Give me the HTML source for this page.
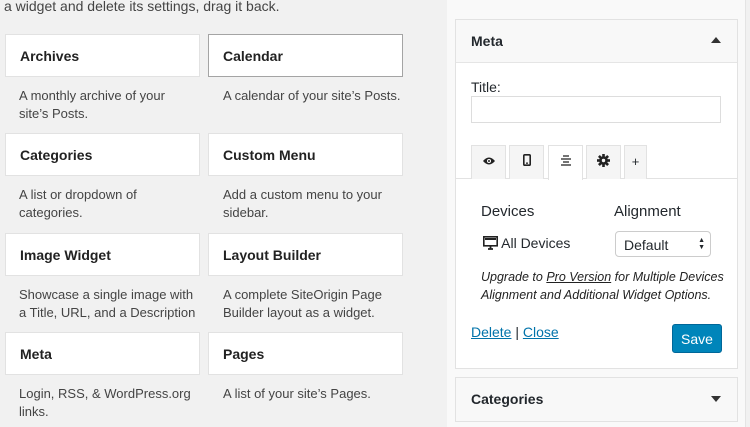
<!DOCTYPE html>
<html><head><meta charset="utf-8"><style>
*{box-sizing:border-box;margin:0;padding:0}
body{width:750px;height:427px;overflow:hidden;background:#f1f1f1;font-family:"Liberation Sans",sans-serif;color:#23282d;position:relative;font-size:13px}
.top{position:absolute;left:4px;top:-2px;font-size:14px;color:#444}
.w{position:absolute;width:195px;height:43px;background:#fff;border:1px solid #e2e2e2;font-weight:bold;font-size:14px;padding:13px 0 0 14px;color:#222}
.w.sel{border:1px solid #a4a4a4}
.d{position:absolute;width:165px;font-size:13px;line-height:18px;color:#444}
.side{position:absolute;left:447px;top:0;width:299px;height:427px;background:#f9f9f9;border-right:1px solid #e4e4e4}
.box{position:absolute;left:455px;width:283px;background:#fff;border:1px solid #e2e2e2}
.hd{background:#f8f8f8;height:43px;font-weight:bold;font-size:14px;padding:13px 0 0 15px;position:relative}
.tab{position:absolute;top:145px;height:34px;background:#f5f5f5;border:1px solid #e2e2e2;border-bottom:none;text-align:center;padding-top:8px;font-size:13px}
a{color:#0073aa}
</style></head><body>
<div class="top">a widget and delete its settings, drag it back.</div>

<div class="w" style="left:5px;top:34px">Archives</div>
<div class="w sel" style="left:208px;top:34px">Calendar</div>
<div class="d" style="left:19px;top:87px">A monthly archive of your site’s Posts.</div>
<div class="d" style="left:223px;top:87px;width:190px">A calendar of your site’s Posts.</div>

<div class="w" style="left:5px;top:133px">Categories</div>
<div class="w" style="left:208px;top:133px">Custom Menu</div>
<div class="d" style="left:19px;top:186px">A list or dropdown of categories.</div>
<div class="d" style="left:223px;top:186px">Add a custom menu to your sidebar.</div>

<div class="w" style="left:5px;top:233px">Image Widget</div>
<div class="w" style="left:208px;top:233px">Layout Builder</div>
<div class="d" style="left:19px;top:286px;width:180px">Showcase a single image with a Title, URL, and a Description</div>
<div class="d" style="left:223px;top:286px;width:160px">A complete SiteOrigin Page Builder layout as a widget.</div>

<div class="w" style="left:5px;top:332px">Meta</div>
<div class="w" style="left:208px;top:332px">Pages</div>
<div class="d" style="left:19px;top:385px;width:190px">Login, RSS, &amp; WordPress.org<br>links.</div>
<div class="d" style="left:223px;top:385px;width:190px">A list of your site’s Pages.</div>

<div class="side"></div>
<div class="box" style="top:19px;height:350px">
 <div class="hd" style="border-bottom:1px solid #e5e5e5">Meta<span style="position:absolute;right:16px;top:17px;width:0;height:0;border-left:5px solid transparent;border-right:5px solid transparent;border-bottom:6px solid #333"></span></div>
</div>
<div style="position:absolute;left:471px;top:79px;font-size:14px">Title:</div>
<div style="position:absolute;left:471px;top:96px;width:250px;height:27px;border:1px solid #ddd;background:#fff"></div>
<div style="position:absolute;left:456px;top:178px;width:281px;border-top:1px solid #e2e2e2"></div>
<div class="tab" style="left:471px;width:35px"><svg width="12" height="10" viewBox="0 0 12 10"><path d="M0 5Q6-2 12 5Q6 12 0 5Z" fill="#222"/><circle cx="6" cy="5" r="2" fill="#fff"/><circle cx="6" cy="5" r="1" fill="#222"/></svg></div>
<div class="tab" style="left:509px;width:35px"><svg width="8" height="12" viewBox="0 0 8 12"><rect x="0.8" y="0.8" width="6.4" height="10.4" rx="1" fill="none" stroke="#222" stroke-width="1.6"/><rect x="3" y="8.5" width="2" height="1.3" fill="#222"/></svg></div>
<div class="tab" style="left:548px;width:35px;background:#fff;height:35px"><svg width="12" height="12" viewBox="0 0 12 12"><path d="M3 2h6M1 5h10M3 8h6M1 11h10" stroke="#222" stroke-width="1.2"/></svg></div>
<div class="tab" style="left:586px;width:35px"><svg width="13" height="13" viewBox="0 0 13 13"><g fill="#222"><circle cx="6.5" cy="6.5" r="4.3"/><rect x="5.2" y="0" width="2.6" height="13"/><rect x="0" y="5.2" width="13" height="2.6"/><rect x="5.2" y="0" width="2.6" height="13" transform="rotate(45 6.5 6.5)"/><rect x="5.2" y="0" width="2.6" height="13" transform="rotate(-45 6.5 6.5)"/></g><circle cx="6.5" cy="6.5" r="1.7" fill="#f5f5f5"/></svg></div>
<div class="tab" style="left:624px;width:23px;font-size:13px">+</div>

<div style="position:absolute;left:481px;top:203px;font-size:15px">Devices</div>
<div style="position:absolute;left:614px;top:203px;font-size:15px">Alignment</div>
<div style="position:absolute;left:483px;top:235px;font-size:14px"><svg width="15" height="14" viewBox="0 0 15 14" style="vertical-align:-2px"><rect x="0.8" y="0.8" width="13.4" height="9" fill="none" stroke="#222" stroke-width="1.6"/><path d="M2 3h11" stroke="#222" stroke-width="2"/><path d="M5 13h5M7.5 10v3" stroke="#222" stroke-width="1.8"/></svg> All Devices</div>
<div style="position:absolute;left:615px;top:231px;width:96px;height:26px;border:1px solid #ccc;border-radius:4px;background:#fff;font-size:14px;padding:5px 0 0 8px">Default<span style="position:absolute;right:5px;top:5px;font-size:7px;line-height:7px">▲<br>▼</span></div>
<div style="position:absolute;left:481px;top:268px;font-size:12.5px;font-style:italic;line-height:18px;color:#222;width:260px">Upgrade to <u>Pro Version</u> for Multiple Devices Alignment and Additional Widget Options.</div>
<div style="position:absolute;left:471px;top:324px;font-size:14px"><a><u>Delete</u></a> | <a><u>Close</u></a></div>
<div style="position:absolute;left:672px;top:324px;width:50px;height:29px;background:#0085ba;border:1px solid #006799;border-radius:3px;color:#fff;font-size:14px;text-align:center;padding-top:6px">Save</div>

<div class="box" style="top:377px;height:45px"><div class="hd">Categories<span style="position:absolute;right:16px;top:18px;width:0;height:0;border-left:5px solid transparent;border-right:5px solid transparent;border-top:6px solid #333"></span></div></div>
</body></html>
